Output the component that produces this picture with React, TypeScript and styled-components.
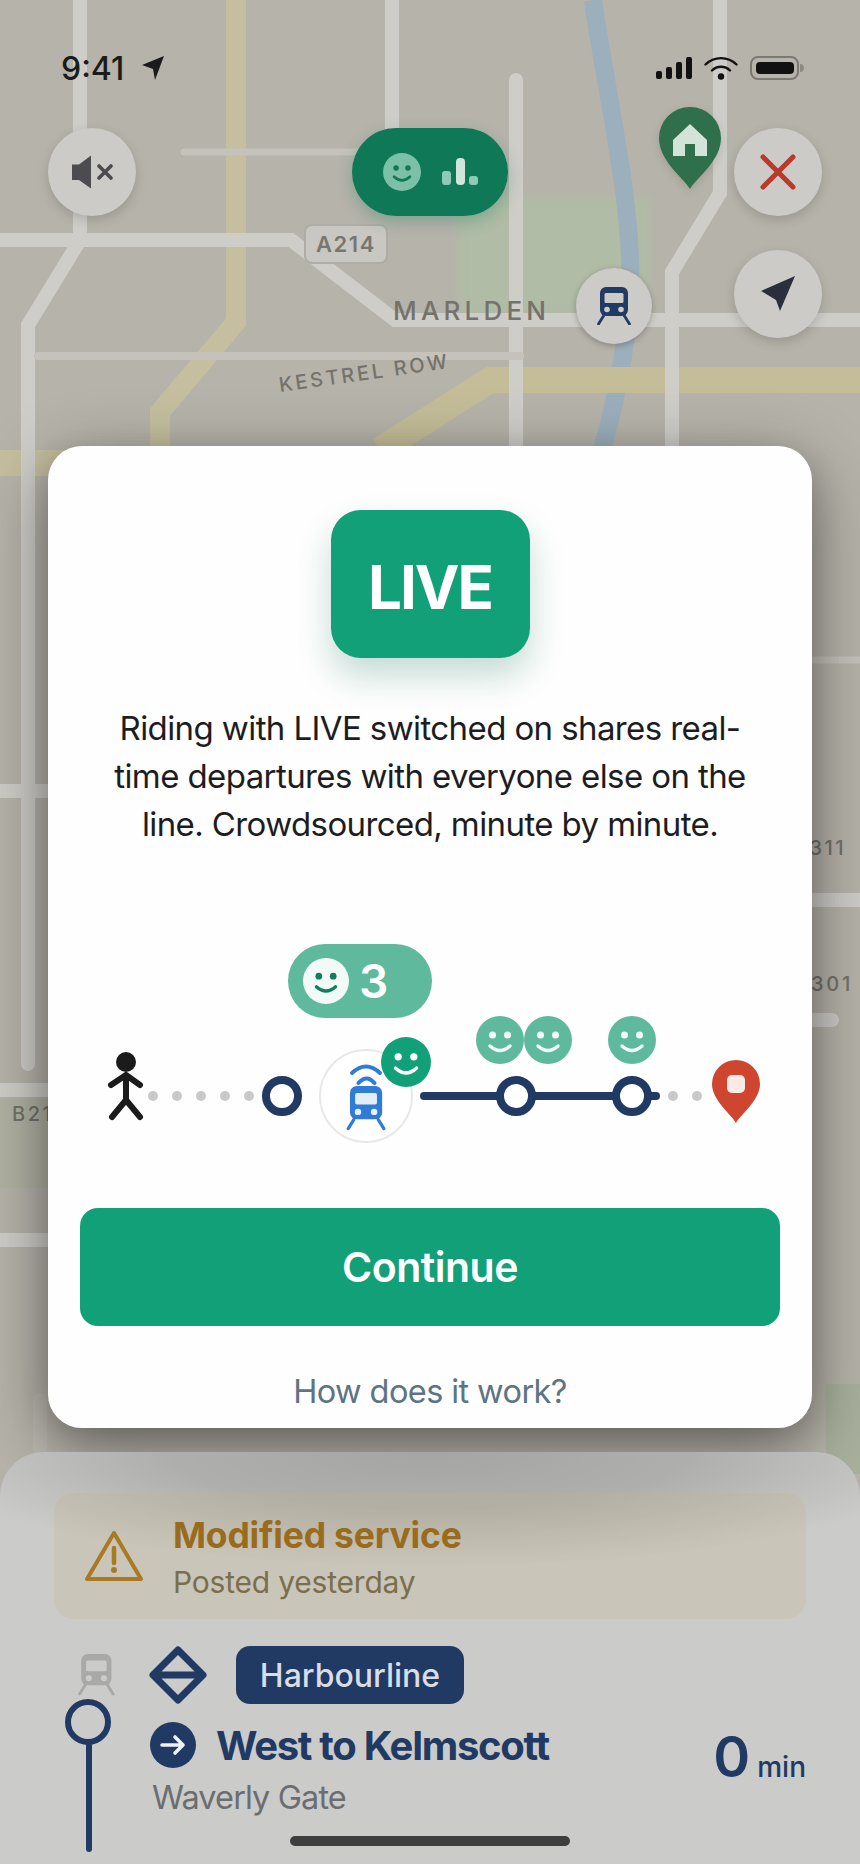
import React from 'react';
import styled, { createGlobalStyle } from 'styled-components';

const navy = '#203a63';
const green = '#12a079';
const softGreen = '#5fba9d';

const GlobalStyle = createGlobalStyle`
  html, body {
    margin: 0;
    padding: 0;
    background: #b6b3aa;
    font-family: Inter, "Liberation Sans", sans-serif;
  }
  * { box-sizing: border-box; }
`;

const Page = styled.div`
  position: relative;
  display: flex;
  flex-direction: column;
  width: 860px;
  height: 1864px;
  overflow: hidden;
  background: #b6b3aa;
`;

const MapCanvas = styled.svg`
  position: absolute;
  inset: 0;
  width: 860px;
  height: 1864px;
`;

const MapLabel = styled.span<{ $x: number; $y: number; $size: number; $spacing: number; $tilt?: number }>`
  position: absolute;
  left: ${p => p.$x}px;
  top: ${p => p.$y}px;
  font-size: ${p => p.$size}px;
  font-weight: 500;
  line-height: 1;
  letter-spacing: ${p => p.$spacing}px;
  color: #73726b;
  white-space: nowrap;
  transform: rotate(${p => p.$tilt ?? 0}deg);
  transform-origin: left center;
`;

const RoadShield = styled.span`
  position: absolute;
  left: 304px;
  top: 224px;
  display: flex;
  align-items: center;
  justify-content: center;
  width: 84px;
  height: 40px;
  border: 2px solid #aeaca4;
  border-radius: 8px;
  background: #c9c7c2;
  color: #77766f;
  font-size: 22px;
  font-weight: 600;
  letter-spacing: 1.6px;
`;

const MapPin = styled.svg<{ $x: number; $y: number }>`
  position: absolute;
  left: ${p => p.$x}px;
  top: ${p => p.$y}px;
  filter: drop-shadow(0 3px 4px rgba(0, 0, 0, 0.12));
`;

const StationMarker = styled.div`
  position: absolute;
  left: 576px;
  top: 268px;
  display: flex;
  align-items: center;
  justify-content: center;
  width: 76px;
  height: 76px;
  border-radius: 50%;
  background: #cdcbc7;
  box-shadow: 0 2px 6px rgba(0, 0, 0, 0.25);
`;

const StatusBar = styled.div`
  position: relative;
  display: flex;
  align-items: center;
  justify-content: space-between;
  height: 48px;
  margin-top: 44px;
  padding: 0 56px 0 61px;
`;

const Clock = styled.div`
  display: flex;
  align-items: center;
  gap: 17px;
  color: #1b1b1b;
  font-size: 32px;
  font-weight: 500;
`;

const StatusIcons = styled.div`
  display: flex;
  align-items: center;
  gap: 12px;
`;

const Controls = styled.div`
  position: relative;
  display: grid;
  grid-template-columns: 88px 1fr 88px;
  align-items: start;
  margin-top: 36px;
  padding: 0 48px;
`;

const CircleButton = styled.div`
  display: flex;
  align-items: center;
  justify-content: center;
  width: 88px;
  height: 88px;
  border-radius: 50%;
  background: #cdcbc7;
  box-shadow: 0 4px 12px rgba(0, 0, 0, 0.16);
`;

const LivePill = styled.div`
  display: flex;
  align-items: center;
  justify-content: center;
  gap: 21px;
  justify-self: center;
  width: 156px;
  height: 88px;
  border-radius: 44px;
  background: #0e7857;
  box-shadow: 0 6px 16px rgba(14, 120, 87, 0.3);
`;

const RightStack = styled.div`
  display: flex;
  flex-direction: column;
  gap: 34px;
  margin-left: 10px;
`;

const ModalShade = styled.div`
  position: absolute;
  left: 48px;
  top: 446px;
  width: 764px;
  height: 982px;
  border-radius: 34px;
  box-shadow: 0 20px 70px rgba(0, 0, 0, 0.42), 0 10px 30px rgba(0, 0, 0, 0.14);
`;

const Modal = styled.div`
  position: absolute;
  z-index: 2;
  left: 48px;
  top: 446px;
  display: flex;
  flex-direction: column;
  align-items: center;
  width: 764px;
  height: 982px;
  padding-top: 64px;
  border-radius: 34px;
  background: #fefefe;
`;

const LiveBadge = styled.div`
  display: flex;
  align-items: center;
  justify-content: center;
  width: 199px;
  height: 148px;
  padding-top: 6px;
  border-radius: 30px;
  background: ${green};
  color: #fff;
  font-size: 60px;
  font-weight: 700;
  letter-spacing: -2px;
  box-shadow: 0 18px 34px rgba(18, 110, 85, 0.24);
`;

const Blurb = styled.p`
  width: 650px;
  margin: 46px 0 0;
  color: #1d1d1f;
  font-size: 33px;
  letter-spacing: -0.6px;
  line-height: 48px;
  text-align: center;
`;

const Diagram = styled.div`
  position: relative;
  width: 764px;
  height: 220px;
  margin-top: 92px;
`;

const CountBubble = styled.div`
  position: absolute;
  left: 240px;
  top: 4px;
  display: flex;
  align-items: center;
  gap: 10px;
  width: 144px;
  height: 74px;
  padding-left: 15px;
  border-radius: 37px;
  background: ${softGreen};
  color: #fff;
  font-size: 46px;
  font-weight: 600;
`;

const ContinueButton = styled.div`
  display: flex;
  align-items: center;
  justify-content: center;
  width: 700px;
  height: 118px;
  margin-top: 48px;
  border-radius: 18px;
  background: ${green};
  color: #fff;
  font-size: 41px;
  font-weight: 600;
  letter-spacing: -0.5px;
`;

const HelpLink = styled.div`
  margin-top: 46px;
  color: #5d7482;
  font-size: 32.5px;
  letter-spacing: -0.6px;
  line-height: 40px;
`;

const Sheet = styled.div`
  position: relative;
  z-index: 1;
  margin-top: auto;
  height: 412px;
  padding: 41px 54px 0;
  border-radius: 44px 44px 0 0;
  background:
    radial-gradient(ellipse 520px 115px at 50% 0, rgba(0, 0, 0, 0.19), rgba(0, 0, 0, 0.14) 50%, rgba(0, 0, 0, 0)),
    #cbcbca;
`;

const Notice = styled.div`
  display: flex;
  align-items: center;
  gap: 29px;
  height: 126px;
  padding-left: 30px;
  border-radius: 20px;
  background: rgba(196, 180, 130, 0.25);
`;

const NoticeText = styled.div`
  display: flex;
  flex-direction: column;
  gap: 6px;
  padding-top: 4px;
`;

const NoticeTitle = styled.div`
  color: #996b1c;
  font-size: 35.5px;
  font-weight: 700;
  letter-spacing: -0.2px;
  line-height: 42px;
`;

const NoticeMeta = styled.div`
  color: #7a6f4d;
  font-size: 30px;
  letter-spacing: -0.2px;
  line-height: 38px;
`;

const Departure = styled.div`
  display: flex;
  margin-top: 27px;
  padding-left: 11px;
`;

const RailColumn = styled.svg`
  flex: none;
  margin-right: 34px;
`;

const DepartureMain = styled.div`
  display: flex;
  flex-direction: column;
`;

const LineRow = styled.div`
  display: flex;
  align-items: center;
  gap: 29px;
  height: 58px;
`;

const LineBadge = styled.div`
  display: flex;
  align-items: center;
  justify-content: center;
  width: 228px;
  height: 58px;
  border-radius: 14px;
  background: ${navy};
  color: #d8dde6;
  font-size: 32px;
  font-weight: 500;
`;

const DirectionRow = styled.div`
  display: flex;
  align-items: center;
  gap: 20px;
  height: 46px;
  margin: 18px 0 0 1px;
  color: ${navy};
  font-size: 40px;
  font-weight: 700;
  letter-spacing: -1.3px;
  white-space: nowrap;
`;

const StationName = styled.div`
  margin: 10px 0 0 3px;
  color: #6b6e70;
  font-size: 32.5px;
  letter-spacing: -0.9px;
  line-height: 40px;
`;

const Eta = styled.div`
  display: flex;
  align-items: baseline;
  gap: 7px;
  margin: 76px 0 0 auto;
  color: ${navy};
  line-height: 70px;
`;

const EtaValue = styled.span`
  font-size: 56px;
  font-weight: 600;
`;

const EtaUnit = styled.span`
  font-size: 28px;
  font-weight: 500;
`;

const HomeIndicator = styled.div`
  position: absolute;
  z-index: 3;
  left: 290px;
  bottom: 18px;
  width: 280px;
  height: 10px;
  border-radius: 5px;
  background: #3e3e3e;
`;

const Face: React.FC<{ cx: number; cy: number; r: number; fill: string; ink: string }> = ({ cx, cy, r, fill, ink }) => {
  const k = r / 24;
  return (
    <g>
      <circle cx={cx} cy={cy} r={r} fill={fill} />
      <circle cx={cx - 7.5 * k} cy={cy - 5 * k} r={3.5 * k} fill={ink} />
      <circle cx={cx + 7.5 * k} cy={cy - 5 * k} r={3.5 * k} fill={ink} />
      <path
        d={`M${cx - 10 * k} ${cy + 6 * k}Q${cx} ${cy + 15 * k} ${cx + 10 * k} ${cy + 6 * k}`}
        fill="none"
        stroke={ink}
        strokeWidth={3.4 * k}
        strokeLinecap="round"
      />
    </g>
  );
};

// train front, drawn in a 34x37 box
const TrainGlyph: React.FC<{ x: number; y: number; scale?: number; body: string; glass: string; lamp: string }> = ({
  x,
  y,
  scale = 1,
  body,
  glass,
  lamp,
}) => (
  <g transform={`translate(${x} ${y}) scale(${scale})`}>
    <rect x="3" y="0" width="28" height="29" rx="6" fill={body} />
    <rect x="7.5" y="6" width="19" height="10" rx="1.5" fill={glass} />
    <circle cx="10" cy="22.5" r="2.8" fill={lamp} />
    <circle cx="24" cy="22.5" r="2.8" fill={lamp} />
    <path d="M6.5 29L1.5 37M27.5 29L32.5 37" stroke={body} strokeWidth="2.8" strokeLinecap="round" />
  </g>
);

const MapBackground: React.FC = () => (
  <MapCanvas viewBox="0 0 860 1864">
    <defs>
      <filter id="soft" x="-10%" y="-10%" width="120%" height="120%">
        <feGaussianBlur stdDeviation="5" />
      </filter>
    </defs>
    <rect x="458" y="197" width="192" height="118" fill="#b0bca6" filter="url(#soft)" />
    <rect x="826" y="1384" width="60" height="90" fill="#a8b19d" />
    <rect x="0" y="1098" width="48" height="90" fill="#adb09f" opacity="0.6" />
    <path d="M593 0C603 75 634 210 630 285C628 345 616 400 602 450" fill="none" stroke="#9cafbc" strokeWidth="18" />
    <g fill="none">
      <path d="M236 0V322L160 412V470" strokeWidth="20" stroke="#c5bf9f" />
      <path d="M0 463H160" strokeWidth="26" stroke="#c5bf9f" />
      <path d="M860 380H490L380 450" strokeWidth="26" stroke="#c4bd98" />
    </g>
    <g fill="none" stroke="#cfcdc8" strokeWidth="14">
      <path d="M80 0V240" />
      <path d="M0 240H291L395 320H860" />
      <path d="M80 240L28 325V1064" strokeLinecap="round" />
      <path d="M392 0V160" />
      <path d="M516 80V470" strokeLinecap="round" />
      <path d="M720 0V193L672 272V470" />
      <path d="M0 791H60M0 1090H60M0 1240H60" />
      <path d="M800 900H860" />
      <path d="M800 1020H832" strokeLinecap="round" />
      <path d="M40 1400V1470" strokeLinecap="round" opacity="0.2" />
    </g>
    <g fill="none" stroke="#c4c2ba" strokeLinecap="round">
      <path d="M184 152H360" strokeWidth="7" />
      <path d="M38 356H520" strokeWidth="8" />
      <path d="M800 660H870" strokeWidth="7" />
    </g>
  </MapCanvas>
);

const RouteDrawing: React.FC = () => (
  <svg width="764" height="220" viewBox="48 940 764 220">
    <circle cx="126" cy="1062" r="10" fill="#1b1b1b" />
    <path
      d="M111 1085L126 1075L140 1085M126 1075V1100M112 1117L126 1100L140 1117"
      fill="none"
      stroke="#1b1b1b"
      strokeWidth="6"
      strokeLinecap="round"
      strokeLinejoin="round"
    />
    {[153, 177, 201, 225, 249, 673, 697].map(x => (
      <circle key={x} cx={x} cy="1096" r="5" fill="#c9c9c9" />
    ))}
    <circle cx="282" cy="1096" r="16" fill="#fff" stroke={navy} strokeWidth="8" />

    <circle cx="366" cy="1096" r="46" fill="#fff" stroke="#e8e8e8" strokeWidth="2" />
    <path
      d="M352 1073Q366 1060 380 1073M358.5 1083Q366.5 1074 374.5 1083"
      fill="none"
      stroke="#2f7bd6"
      strokeWidth="4"
      strokeLinecap="round"
    />
    <TrainGlyph x={346.5} y={1086} scale={1.15} body="#2f7bd6" glass="#e3edf9" lamp="#e8f1fb" />
    <Face cx={406} cy={1062} r={25} fill={green} ink="#fff" />

    <path d="M424 1096H656" stroke={navy} strokeWidth="8" strokeLinecap="round" />
    <circle cx="516" cy="1096" r="16" fill="#fff" stroke={navy} strokeWidth="8" />
    <circle cx="632" cy="1096" r="16" fill="#fff" stroke={navy} strokeWidth="8" />
    <Face cx={500} cy={1040} r={24} fill={softGreen} ink="#f2faf7" />
    <Face cx={548} cy={1040} r={24} fill={softGreen} ink="#f2faf7" />
    <Face cx={632} cy={1040} r={24} fill={softGreen} ink="#f2faf7" />

    <path d="M736 1123C730 1113 712 1100 712 1084A24 24 0 0 1 760 1084C760 1100 742 1113 736 1123Z" fill="#cf4630" />
    <rect x="727" y="1075" width="18" height="18" rx="5" fill="#fdeae6" />
  </svg>
);

export default function App() {
  return (
    <Page>
      <GlobalStyle />
      <MapBackground />
      <RoadShield>A214</RoadShield>
      <MapLabel $x={393} $y={298} $size={26} $spacing={4.2}>MARLDEN</MapLabel>
      <MapLabel $x={279} $y={375} $size={20} $spacing={2.8} $tilt={-8}>KESTREL ROW</MapLabel>
      <MapLabel $x={12} $y={1104} $size={20} $spacing={2.5}>B214</MapLabel>
      <MapLabel $x={794} $y={838} $size={20} $spacing={2.4}>B311</MapLabel>
      <MapLabel $x={795} $y={974} $size={20} $spacing={2.8}>B301</MapLabel>

      <MapPin $x={659} $y={107} width="62" height="82" viewBox="0 0 62 82">
        <path d="M31 82C24 70 0 54 0 31A31 31 0 0 1 62 31C62 54 38 70 31 82Z" fill="#2f6f4b" />
        <path d="M31 17L48 33V49H14V33Z" fill="#d3e3d8" />
        <rect x="26" y="37" width="10" height="12" fill="#2f6f4b" />
      </MapPin>
      <StationMarker>
        <svg width="34" height="38" viewBox="0 0 34 38">
          <TrainGlyph x={0} y={0} body={navy} glass="#cdcbc7" lamp="#cdcbc7" />
        </svg>
      </StationMarker>

      <StatusBar>
        <Clock>
          9:41
          <svg width="24" height="26" viewBox="0 0 24 26">
            <path d="M23 1L1 10L12 14L14 25Z" fill="#1b1b1b" />
          </svg>
        </Clock>
        <StatusIcons>
          <svg width="36" height="22" viewBox="0 0 36 22">
            <rect x="0" y="14" width="6" height="8" rx="2" fill="#111" />
            <rect x="10" y="10" width="6" height="12" rx="2" fill="#111" />
            <rect x="20" y="5" width="6" height="17" rx="2" fill="#111" />
            <rect x="30" y="0" width="6" height="22" rx="2" fill="#111" />
          </svg>
          <svg width="34" height="24" viewBox="0 0 34 24">
            <path d="M1.5 8.5C10 0 24 0 32.5 8.5M8 14.5C13 9.5 21 9.5 26 14.5" fill="none" stroke="#111" strokeWidth="2.4" strokeLinecap="round" />
            <circle cx="17" cy="20.5" r="3.2" fill="#111" />
          </svg>
          <svg width="54" height="24" viewBox="0 0 54 24">
            <rect x="1" y="1" width="47" height="22" rx="7" fill="none" stroke="#7a7a72" strokeWidth="2" />
            <rect x="6" y="6" width="38" height="12" rx="4" fill="#111" />
            <path d="M50 8C53 8 54 10 54 12C54 14 53 16 50 16Z" fill="#8b8b84" />
          </svg>
        </StatusIcons>
      </StatusBar>

      <Controls>
        <CircleButton>
          <svg width="41" height="34" viewBox="0 0 41 34">
            <path d="M0 9.5H7L19 0.5V33.5L7 25H0Z" fill="#4b4b50" />
            <path d="M27 11L39 23M39 11L27 23" stroke="#4b4b50" strokeWidth="3.6" strokeLinecap="round" />
          </svg>
        </CircleButton>
        <LivePill>
          <svg width="38" height="38" viewBox="0 0 38 38">
            <Face cx={19} cy={19} r={19} fill="#7cc0a8" ink="#0e7857" />
          </svg>
          <svg width="36" height="28" viewBox="0 0 36 28">
            <rect x="0" y="13" width="9" height="14" rx="3" fill="#8fcab6" />
            <rect x="14" y="0" width="9" height="27" rx="4" fill="#cfe6dd" />
            <rect x="27" y="18" width="9" height="9" rx="3" fill="#8fcab6" />
          </svg>
        </LivePill>
        <RightStack>
          <CircleButton>
            <svg width="36" height="36" viewBox="0 0 36 36">
              <path d="M3 3L33 33M33 3L3 33" stroke="#b93a2a" strokeWidth="5" strokeLinecap="round" />
            </svg>
          </CircleButton>
          <CircleButton>
            <svg width="36" height="36" viewBox="0 0 36 36">
              <path d="M35 0L1 15L16 24L20 35Z" fill="#2b2f3d" />
            </svg>
          </CircleButton>
        </RightStack>
      </Controls>

      <ModalShade />

      <Sheet>
        <Notice>
          <svg width="60" height="52" viewBox="0 0 60 52">
            <path d="M30 3L57 49H3Z" fill="none" stroke="#a87a22" strokeWidth="4" strokeLinejoin="round" />
            <path d="M30 18V33" stroke="#a87a22" strokeWidth="4.5" strokeLinecap="round" />
            <circle cx="30" cy="40" r="3" fill="#a87a22" />
          </svg>
          <NoticeText>
            <NoticeTitle>Modified service</NoticeTitle>
            <NoticeMeta>Posted yesterday</NoticeMeta>
          </NoticeText>
        </Notice>
        <Departure>
          <RailColumn width="50" height="208" viewBox="65 1646 50 208">
            <TrainGlyph x={78} y={1654} scale={1.08} body="#a9a9a9" glass="#cbcbca" lamp="#cbcbca" />
            <circle cx="88" cy="1722" r="20" fill="none" stroke={navy} strokeWidth="6" />
            <path d="M89 1745V1849" stroke={navy} strokeWidth="6" strokeLinecap="round" />
          </RailColumn>
          <DepartureMain>
            <LineRow>
              <svg width="58" height="58" viewBox="0 0 58 58">
                <path d="M29 4L54 29L29 54L4 29ZM4 29H54" fill="none" stroke={navy} strokeWidth="7" strokeLinejoin="round" />
              </svg>
              <LineBadge>Harbourline</LineBadge>
            </LineRow>
            <DirectionRow>
              <svg width="46" height="46" viewBox="0 0 46 46">
                <circle cx="23" cy="23" r="23" fill={navy} />
                <path d="M12 23H33M25 15L33 23L25 31" fill="none" stroke="#eef1f5" strokeWidth="3.6" strokeLinecap="round" strokeLinejoin="round" />
              </svg>
              West to Kelmscott
            </DirectionRow>
            <StationName>Waverly Gate</StationName>
          </DepartureMain>
          <Eta>
            <EtaValue>0</EtaValue>
            <EtaUnit>min</EtaUnit>
          </Eta>
        </Departure>
      </Sheet>

      <Modal>
        <LiveBadge>LIVE</LiveBadge>
        <Blurb>Riding with LIVE switched on shares real-time departures with everyone else on the line. Crowdsourced, minute by minute.</Blurb>
        <Diagram>
          <RouteDrawing />
          <CountBubble>
            <svg width="46" height="46" viewBox="0 0 46 46">
              <Face cx={23} cy={23} r={23} fill="#f2faf7" ink="#0f7e5e" />
            </svg>
            3
          </CountBubble>
        </Diagram>
        <ContinueButton>Continue</ContinueButton>
        <HelpLink>How does it work?</HelpLink>
      </Modal>

      <HomeIndicator />
    </Page>
  );
}
